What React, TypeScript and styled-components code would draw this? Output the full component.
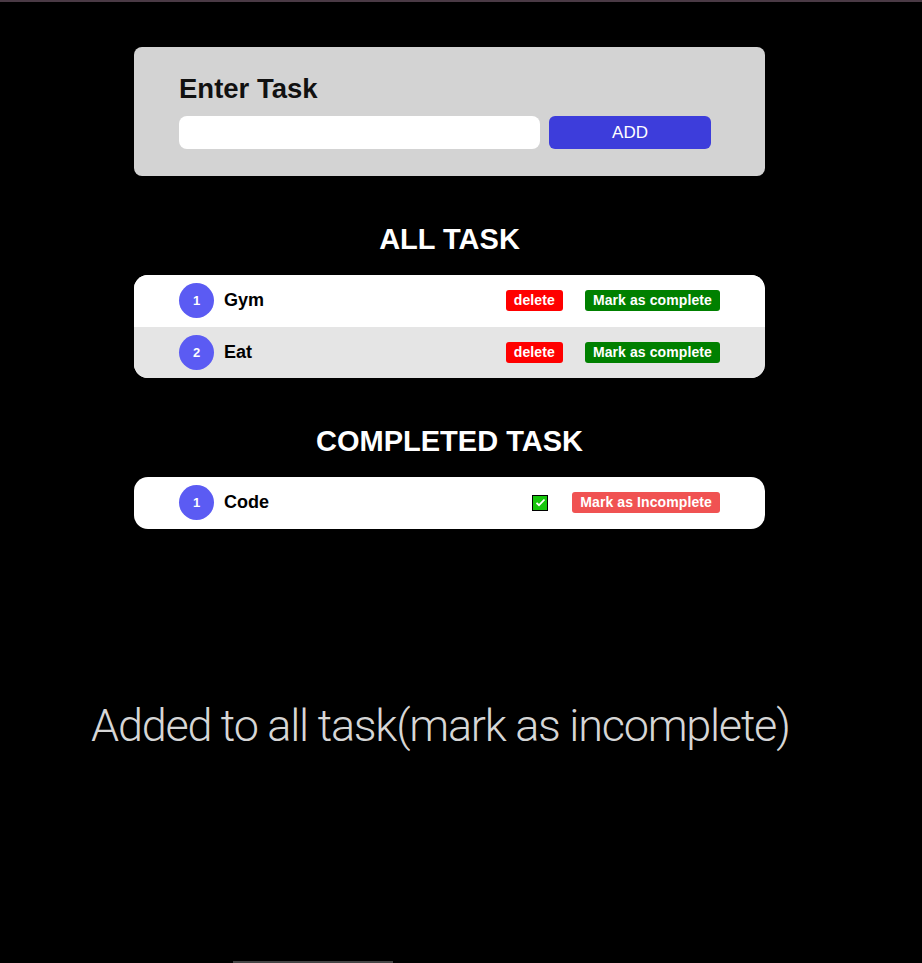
import * as React from "react";
import styled, { createGlobalStyle } from "styled-components";

type Task = { id: number; title: string };

const allTasks: Task[] = [
  { id: 1, title: "Gym" },
  { id: 2, title: "Eat" },
];

const completedTasks: Task[] = [{ id: 1, title: "Code" }];

const GlobalStyle = createGlobalStyle`
  html, body {
    margin: 0;
    padding: 0;
    background: #000;
  }
  body {
    font-family: "Liberation Sans", Arial, sans-serif;
  }
`;

export default function App() {
  return (
    <>
      <GlobalStyle />
      <StyledPage>
        <StyledTopLine />
        <StyledMain>
          <StyledInputPanel>
            <StyledPanelTitle>Enter Task</StyledPanelTitle>
            <StyledInputRow>
              <StyledInput type="text" />
              <StyledAddButton>ADD</StyledAddButton>
            </StyledInputRow>
          </StyledInputPanel>

          <StyledSectionTitle>ALL TASK</StyledSectionTitle>
          <StyledList>
            {allTasks.map((task, i) => (
              <StyledRow key={task.id} $shaded={i % 2 === 1}>
                <StyledIndex>{i + 1}</StyledIndex>
                <StyledTaskName>{task.title}</StyledTaskName>
                <StyledActions $gap={22}>
                  <StyledSmallButton $color="#ff0000">delete</StyledSmallButton>
                  <StyledSmallButton $color="#008000">
                    Mark as complete
                  </StyledSmallButton>
                </StyledActions>
              </StyledRow>
            ))}
          </StyledList>

          <StyledSectionTitle>COMPLETED TASK</StyledSectionTitle>
          <StyledList>
            {completedTasks.map((task, i) => (
              <StyledRow key={task.id} $shaded={false}>
                <StyledIndex>{i + 1}</StyledIndex>
                <StyledTaskName>{task.title}</StyledTaskName>
                <StyledActions $gap={24}>
                  <StyledCheck>
                    <svg width="11" height="9" viewBox="0 0 11 9">
                      <path
                        d="M1.5 4.8 L4 7.2 L9.5 1.5"
                        fill="none"
                        stroke="#fff"
                        strokeWidth="1.8"
                      />
                    </svg>
                  </StyledCheck>
                  <StyledSmallButton $color="#f05252">
                    Mark as Incomplete
                  </StyledSmallButton>
                </StyledActions>
              </StyledRow>
            ))}
          </StyledList>
        </StyledMain>

        <StyledNote>Added to all task(mark as incomplete)</StyledNote>
        <StyledBottomBar />
      </StyledPage>
    </>
  );
}

const StyledPage = styled.div`
  height: 963px;
  display: flex;
  flex-direction: column;
  overflow: hidden;
`;

const StyledTopLine = styled.div`
  height: 2px;
  background: #4a3a45;
`;

const StyledMain = styled.div`
  width: 631px;
  margin: 45px 0 0 134px;
  display: flex;
  flex-direction: column;
`;

const StyledInputPanel = styled.div`
  background: #d3d3d3;
  border-radius: 8px;
  height: 129px;
  box-sizing: border-box;
  padding: 26px 45px 0;
`;

const StyledPanelTitle = styled.h2`
  margin: 0;
  font-size: 27.5px;
  line-height: 32px;
  font-weight: 700;
  color: #111;
`;

const StyledInputRow = styled.div`
  display: flex;
  gap: 9px;
  margin-top: 11px;
`;

const StyledInput = styled.input`
  width: 361px;
  height: 33px;
  box-sizing: border-box;
  border: none;
  border-radius: 8px;
  background: #fff;
  outline: none;
`;

const StyledAddButton = styled.button`
  width: 162px;
  height: 33px;
  border: none;
  border-radius: 6px;
  background: #3d3ddb;
  color: #fff;
  font-family: "Liberation Sans", Arial, sans-serif;
  font-size: 17px;
  padding: 0;
`;

const StyledSectionTitle = styled.h2`
  margin: 48px 0 21px;
  text-align: center;
  color: #fff;
  font-size: 29px;
  line-height: 30px;
  font-weight: 700;
`;

const StyledList = styled.div`
  background: #fff;
  border-radius: 14px;
  overflow: hidden;
`;

const StyledRow = styled.div<{ $shaded: boolean }>`
  height: 51.5px;
  display: flex;
  align-items: center;
  padding: 0 45px;
  background: ${(p) => (p.$shaded ? "#e5e5e5" : "#fff")};
`;

const StyledIndex = styled.span`
  width: 35px;
  height: 35px;
  border-radius: 50%;
  background: #5b5bf3;
  color: #fff;
  font-size: 13px;
  font-weight: 700;
  display: flex;
  align-items: center;
  justify-content: center;
  flex-shrink: 0;
`;

const StyledTaskName = styled.span`
  margin-left: 10px;
  font-size: 18px;
  font-weight: 700;
  color: #000;
  flex: 1;
`;

const StyledActions = styled.div<{ $gap: number }>`
  display: flex;
  align-items: center;
  gap: ${(p) => p.$gap}px;
`;

const StyledSmallButton = styled.button<{ $color: string }>`
  height: 21px;
  padding: 0 8px;
  border: none;
  border-radius: 3px;
  background: ${(p) => p.$color};
  color: #fff;
  font-family: "Liberation Sans", Arial, sans-serif;
  font-size: 14px;
  font-weight: 700;
  letter-spacing: 0.1px;
  line-height: 21px;
`;

const StyledCheck = styled.span`
  width: 16px;
  height: 16px;
  box-sizing: border-box;
  border: 1px solid #000;
  background: #16c60c;
  display: flex;
  align-items: center;
  justify-content: center;
`;

const StyledNote = styled.p`
  margin: 171px 0 0 91px;
  font-family: Roboto, "Open Sans", sans-serif;
  font-weight: 300;
  font-size: 45px;
  line-height: 52px;
  letter-spacing: -1.25px;
  color: #d6d6d6;
  white-space: nowrap;
`;

const StyledBottomBar = styled.div`
  margin: auto 0 0 233px;
  width: 160px;
  height: 2px;
  background: #444;
`;
